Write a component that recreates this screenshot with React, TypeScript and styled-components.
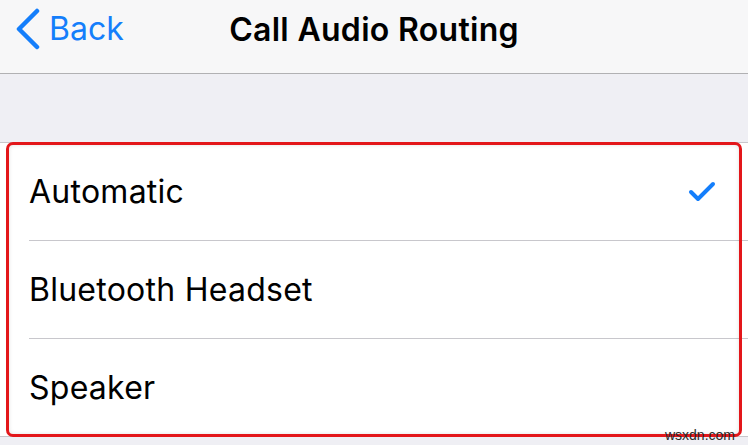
import React from "react";
import styled, { createGlobalStyle } from "styled-components";

const Global = createGlobalStyle`
  html, body { margin: 0; padding: 0; background: #efeff4; }
  body { font-family: Inter, "Noto Sans", "Liberation Sans", sans-serif; -webkit-font-smoothing: antialiased; }
`;

const Page = styled.div`
  width: 748px;
  height: 445px;
  overflow: hidden;
  position: relative;
  background: #efeff4;
  display: flex;
  flex-direction: column;
`;

const NavBar = styled.header`
  flex: none;
  background: #f7f7f8;
  border-bottom: 1px solid #b1b1b3;
  display: grid;
  grid-template-columns: 1fr auto 1fr;
  align-items: start;
  padding-top: 10px;
  box-sizing: content-box;
  height: 63px;
`;

const BackButton = styled.button`
  justify-self: start;
  display: flex;
  align-items: center;
  gap: 8px;
  border: 0;
  background: none;
  padding: 0 0 0 15px;
  margin-top: -2px;
  color: #147efb;
  font-family: inherit;
  font-size: 32px;
  line-height: 40px;
  cursor: pointer;
`;

const Title = styled.h1`
  margin: 0;
  font-size: 32px;
  line-height: 40px;
  font-weight: 600;
  color: #000;
  letter-spacing: 0.3px;
`;

const GroupGap = styled.div`
  height: 68px;
  flex: none;
`;

const List = styled.ul`
  position: relative;
  list-style: none;
  margin: 0;
  padding: 0;
  background: #fff;
  border-top: 1px solid #c8c7cc;
  border-bottom: 1px solid #c8c7cc;
`;

const Row = styled.li<{ $last?: boolean }>`
  height: 97px;
  display: flex;
  align-items: center;
  justify-content: space-between;
  margin-left: 29px;
  padding-right: 32px;
  border-bottom: ${(p) => (p.$last ? "none" : "1px solid #c8c7cc")};
  font-size: 32px;
  line-height: 40px;
  color: #000;
  letter-spacing: 0.25px;
`;

const Highlight = styled.div`
  position: absolute;
  left: 6px;
  right: 6px;
  top: -1px;
  bottom: -1px;
  border: 3px solid #e3161a;
  border-radius: 7px;
  box-shadow: inset 0 0 4px rgba(0, 0, 0, 0.12);
  pointer-events: none;
`;

const Watermark = styled.span`
  position: absolute;
  right: 13px;
  bottom: 2px;
  font-family: "Liberation Sans", Arial, sans-serif;
  font-size: 14px;
  color: #2a2a2a;
`;

const Chevron = () => (
  <svg width="26" height="42" viewBox="0 0 26 42" fill="none">
    <path d="M22 3 L4 21 L22 39" stroke="#147efb" strokeWidth="4.5" strokeLinecap="round" strokeLinejoin="round" />
  </svg>
);

const Check = () => (
  <svg width="28" height="22" viewBox="0 0 28 22" fill="none">
    <path d="M3 11 L10 18 L25 3" stroke="#147efb" strokeWidth="4" strokeLinecap="round" strokeLinejoin="round" />
  </svg>
);

const options = [
  { label: "Automatic", selected: true },
  { label: "Bluetooth Headset", selected: false },
  { label: "Speaker", selected: false },
];

export default function App() {
  return (
    <Page>
      <Global />
      <NavBar>
        <BackButton>
          <Chevron />
          Back
        </BackButton>
        <Title>Call Audio Routing</Title>
        <span />
      </NavBar>
      <GroupGap />
      <List>
        {options.map((o, i) => (
          <Row key={o.label} $last={i === options.length - 1}>
            {o.label}
            {o.selected && <Check />}
          </Row>
        ))}
        <Highlight />
      </List>
      <Watermark>wsxdn.com</Watermark>
    </Page>
  );
}
